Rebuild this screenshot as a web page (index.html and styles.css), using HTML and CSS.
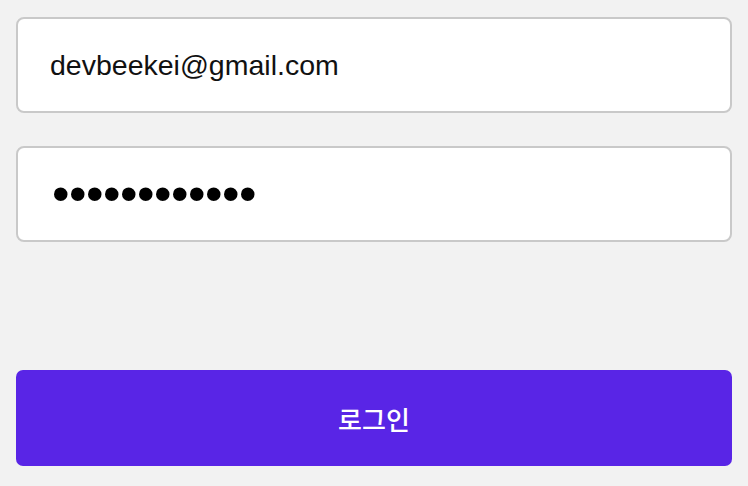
FILE: index.html
```html
<!DOCTYPE html>
<html lang="ko">
<head>
    <meta charset="UTF-8">
    <meta name="viewport" content="width=device-width, initial-scale=1.0">
    <title>로그인</title>
    <link rel="stylesheet" href="styles.css">
</head>
<body>
    <form class="login-form" method="POST">
        <input type="email" name="email" class="field" value="devbeekei@gmail.com">
        <input type="password" name="password" class="field field-password" value="password1234">
        <button type="submit" class="login-button">로그인</button>
    </form>
</body>
</html>
```

FILE: styles.css
```css
* {
    margin: 0;
    padding: 0;
    box-sizing: border-box;
}
body {
    background: #f2f2f2;
    font-family: "Liberation Sans", "Noto Sans CJK KR", sans-serif;
    padding: 17px 16px;
}
.login-form {
    display: flex;
    flex-direction: column;
}
.field {
    width: 100%;
    height: 96px;
    padding: 0 32px;
    border: 2px solid #c9c9c9;
    border-radius: 8px;
    background: white;
    font-family: "Liberation Sans", sans-serif;
    font-size: 28.5px;
    color: #111;
    outline: none;
}
.field + .field {
    margin-top: 33px;
}
.field-password {
    padding-left: 34px;
    font-size: 50px;
    letter-spacing: -0.5px;
    color: #000;
}
.login-button {
    margin-top: 128px;
    width: 100%;
    height: 96px;
    border: none;
    border-radius: 7px;
    background: #5925e6;
    color: white;
    font-family: "Noto Sans CJK KR", sans-serif;
    font-size: 26px;
    font-weight: 500;
    cursor: pointer;
}
```
